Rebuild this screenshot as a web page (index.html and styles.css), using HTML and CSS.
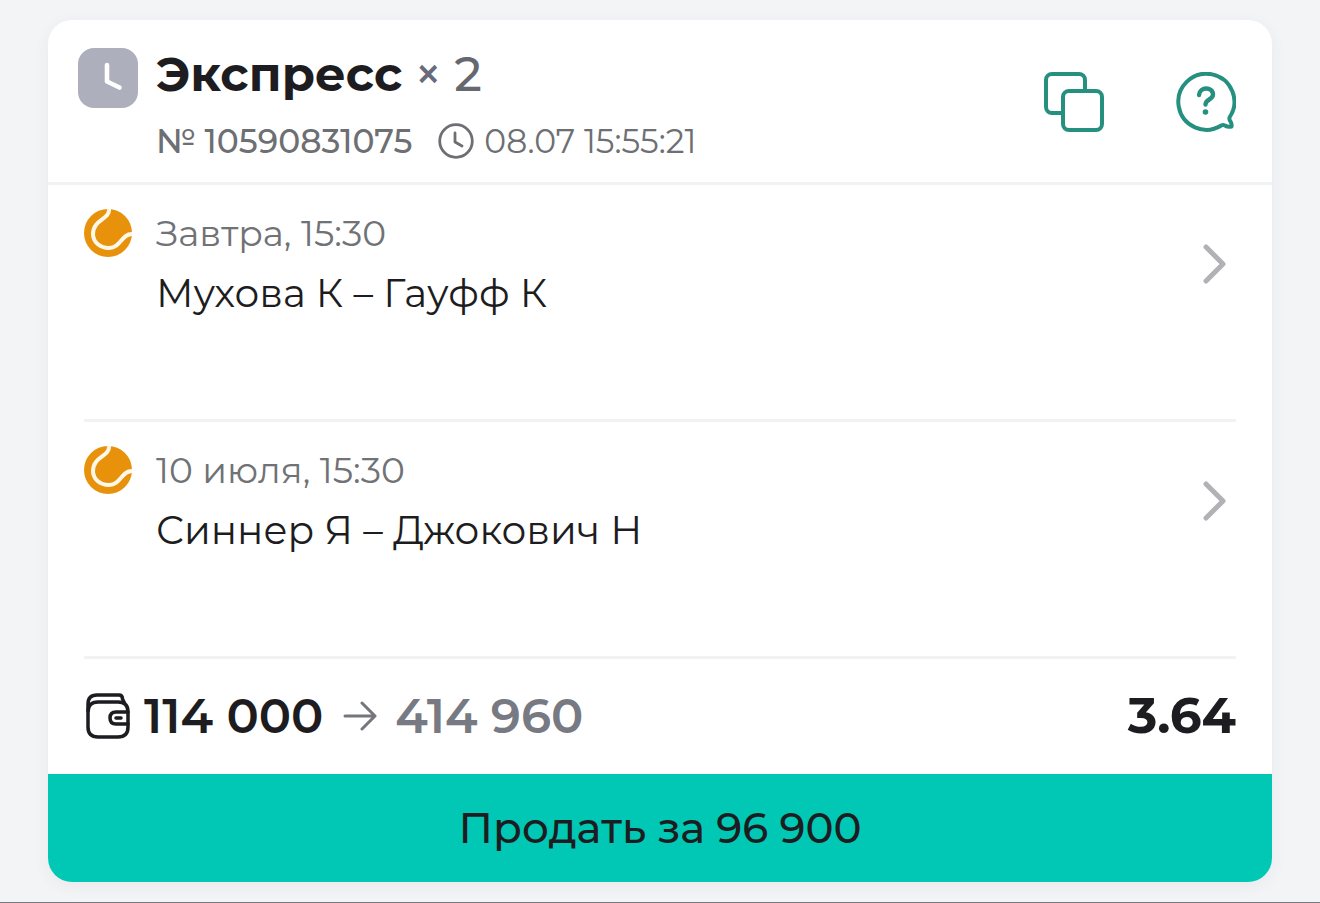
FILE: index.html
```html
<!DOCTYPE html>
<html lang="ru">
<head>
  <meta charset="UTF-8" />
  <meta name="viewport" content="width=device-width, initial-scale=1.0"/>
  <title>Экспресс № 10590831075</title>
  <link rel="stylesheet" href="styles.css">
</head>
<body>

  <main class="bet-card">
    <header class="bet-header">
      <svg class="status-icon" viewBox="0 0 60 60" aria-hidden="true">
        <rect width="60" height="60" rx="16" fill="#adafbd"/>
        <path d="M29 17v16.500l12.500 6" fill="none" stroke="#fff" stroke-width="4.600" stroke-linecap="round" stroke-linejoin="round"/>
      </svg>
      <div class="bet-info">
        <h1>Экспресс <span class="times">×</span> <span class="count">2</span></h1>
        <div class="bet-meta">
          <span class="bet-number">№ 10590831075</span>
          <svg class="clock-icon" viewBox="0 0 36 36" aria-hidden="true">
            <g fill="none" stroke="#6d6f73" stroke-width="2.8" stroke-linecap="round" stroke-linejoin="round">
              <circle cx="18" cy="18" r="16.3"/>
              <path d="M17 10v9l7 4"/>
            </g>
          </svg>
          <time>08.07 15:55:21</time>
        </div>
      </div>
      <div class="actions">
        <button type="button" aria-label="Скопировать">
          <svg viewBox="0 0 60 60" aria-hidden="true">
            <g fill="#fff" stroke="#25907f" stroke-width="4">
              <rect x="2" y="2" width="39" height="39" rx="6"/>
              <rect x="19" y="19" width="39" height="39" rx="6"/>
            </g>
          </svg>
        </button>
        <button type="button" aria-label="Помощь">
          <svg viewBox="0 0 60 60" aria-hidden="true">
            <g fill="none" stroke="#25907f" stroke-width="4" stroke-linecap="round" stroke-linejoin="round">
              <path d="M53.500 45.500A28 28 0 1 0 45.200 53.500Q47 52.500 49 53.500Q52 55.500 55.500 54.500Q56 52 54.500 49.500Q53 47.500 53.500 45.500Z"/>
              <path d="M23 23C23.500 14.500 37 14.500 37 22.500C37 28 29.500 27 29.500 32.500" stroke-width="4.400"/>
            </g>
            <circle cx="29.500" cy="40" r="2.800" fill="#25907f"/>
          </svg>
        </button>
      </div>
    </header>

    <section class="events">
      <a class="event" href="#">
        <svg class="ball" viewBox="0 0 48 48" aria-hidden="true">
          <circle cx="24" cy="24" r="24" fill="#e8920c"/>
          <path d="M25 0C26 11 9 10 9 25C9 33 16 39 25 39C37 39 37 25 48 25" fill="none" stroke="#fff8e8" stroke-width="4"/>
        </svg>
        <div class="event-info">
          <time>Завтра, 15:30</time>
          <p>Мухова К – Гауфф К</p>
        </div>
        <svg class="chevron" viewBox="0 0 24 40" aria-hidden="true">
          <path d="M3 3l17 17L3 37" fill="none" stroke="#b2b2b6" stroke-width="5" stroke-linecap="round" stroke-linejoin="round"/>
        </svg>
      </a>
      <a class="event" href="#">
        <svg class="ball" viewBox="0 0 48 48" aria-hidden="true">
          <circle cx="24" cy="24" r="24" fill="#e8920c"/>
          <path d="M25 0C26 11 9 10 9 25C9 33 16 39 25 39C37 39 37 25 48 25" fill="none" stroke="#fff8e8" stroke-width="4"/>
        </svg>
        <div class="event-info">
          <time>10 июля, 15:30</time>
          <p>Синнер Я – Джокович Н</p>
        </div>
        <svg class="chevron" viewBox="0 0 24 40" aria-hidden="true">
          <path d="M3 3l17 17L3 37" fill="none" stroke="#b2b2b6" stroke-width="5" stroke-linecap="round" stroke-linejoin="round"/>
        </svg>
      </a>
    </section>

    <div class="totals">
      <svg class="wallet" viewBox="0 0 44 46" aria-hidden="true">
        <g fill="none" stroke="#1d1d21" stroke-width="3.500" stroke-linejoin="round" stroke-linecap="round">
          <path d="M12 9H32Q42 9 42 19V34Q42 44 32 44H12Q2 44 2 34V19Q2 9 12 9Z"/>
          <path d="M2 18V11Q2 2 11 2H33Q36.500 2 36.500 6L38.500 10"/>
          <path d="M42 19H30Q24 19 24 25T30 31H42M30 25h5"/>
        </g>
      </svg>
      <span class="stake">114 000</span>
      <svg class="arrow" viewBox="0 0 34 30" aria-hidden="true">
        <path d="M2 15H32M19 2L32 15L19 28" fill="none" stroke="#74767c" stroke-width="3" stroke-linecap="round" stroke-linejoin="round"/>
      </svg>
      <span class="payout">414 960</span>
      <span class="odds">3.64</span>
    </div>

    <button class="sell" type="button">Продать за 96 900</button>
  </main>

</body>
</html>
```

FILE: styles.css
```css
* {
  box-sizing: border-box;
}

body {
  font-family: 'Montserrat', 'Inter', sans-serif;
  background: #f3f4f6;
  color: #1d1d21;
  margin: 0;
  padding: 20px 48px;
  min-height: 100vh;
  border-bottom: 1px solid #77777d;
}

h1, p {
  margin: 0;
}

svg {
  display: block;
  flex-shrink: 0;
}

button {
  font-family: inherit;
  border: none;
  cursor: pointer;
}

.bet-card {
  background: white;
  border-radius: 24px;
  overflow: hidden;
  box-shadow: 0 4px 16px rgba(60,60,100,0.06);
}

.bet-header {
  display: flex;
  align-items: flex-start;
  padding: 24px 36px 19px 30px;
  border-bottom: 3px solid #f1f2f3;
}

.status-icon {
  width: 60px;
  height: 60px;
  margin-top: 4px;
  margin-right: 18px;
}

.bet-info {
  flex: 1;
}

h1 {
  display: flex;
  align-items: center;
  font-size: 48px;
  line-height: 60px;
  font-weight: 700;
}

.times {
  margin: 0 12px;
  font-weight: 500;
  color: #686b7c;
}

.count {
  font-weight: 500;
  color: #66686f;
}

.bet-meta {
  display: flex;
  align-items: center;
  margin-top: 15px;
  font-size: 33px;
  line-height: 44px;
  color: #6d6f73;
}

.bet-number {
  font-weight: 500;
}

.clock-icon {
  width: 36px;
  height: 36px;
  margin: 0 10px 0 26px;
}

.actions {
  display: flex;
  gap: 72px;
  margin-top: 28px;
}

.actions button {
  padding: 0;
  background: none;
}

.actions svg {
  width: 60px;
  height: 60px;
}

.events {
  padding: 0 36px;
}

.event {
  display: flex;
  align-items: flex-start;
  min-height: 237px;
  padding-top: 24px;
  border-bottom: 3px solid #f1f2f3;
  color: inherit;
  text-decoration: none;
}

.ball {
  width: 48px;
  height: 48px;
  margin-right: 24px;
}

.event-info {
  flex: 1;
}

.event time {
  display: block;
  font-size: 36px;
  line-height: 48px;
  color: #707276;
}

.event p {
  margin-top: 12px;
  font-size: 39px;
  line-height: 48px;
}

.chevron {
  width: 24px;
  height: 40px;
  margin: 35px 9px 0 0;
}

.totals {
  display: flex;
  align-items: center;
  padding: 27px 36px 28px;
  font-size: 48px;
  line-height: 60px;
  font-weight: 600;
}

.wallet {
  width: 44px;
  height: 46px;
  margin: 0 14px 0 2px;
}

.arrow {
  width: 34px;
  height: 30px;
  margin: 0 18px 0 20px;
}

.payout {
  color: #777a82;
}

.odds {
  margin-left: auto;
  font-size: 50px;
  font-weight: 700;
}

.sell {
  display: block;
  width: 100%;
  padding: 24px;
  background: #00c8b4;
  color: #1d1d21;
  font-size: 42px;
  line-height: 60px;
  font-weight: 500;
}
```
